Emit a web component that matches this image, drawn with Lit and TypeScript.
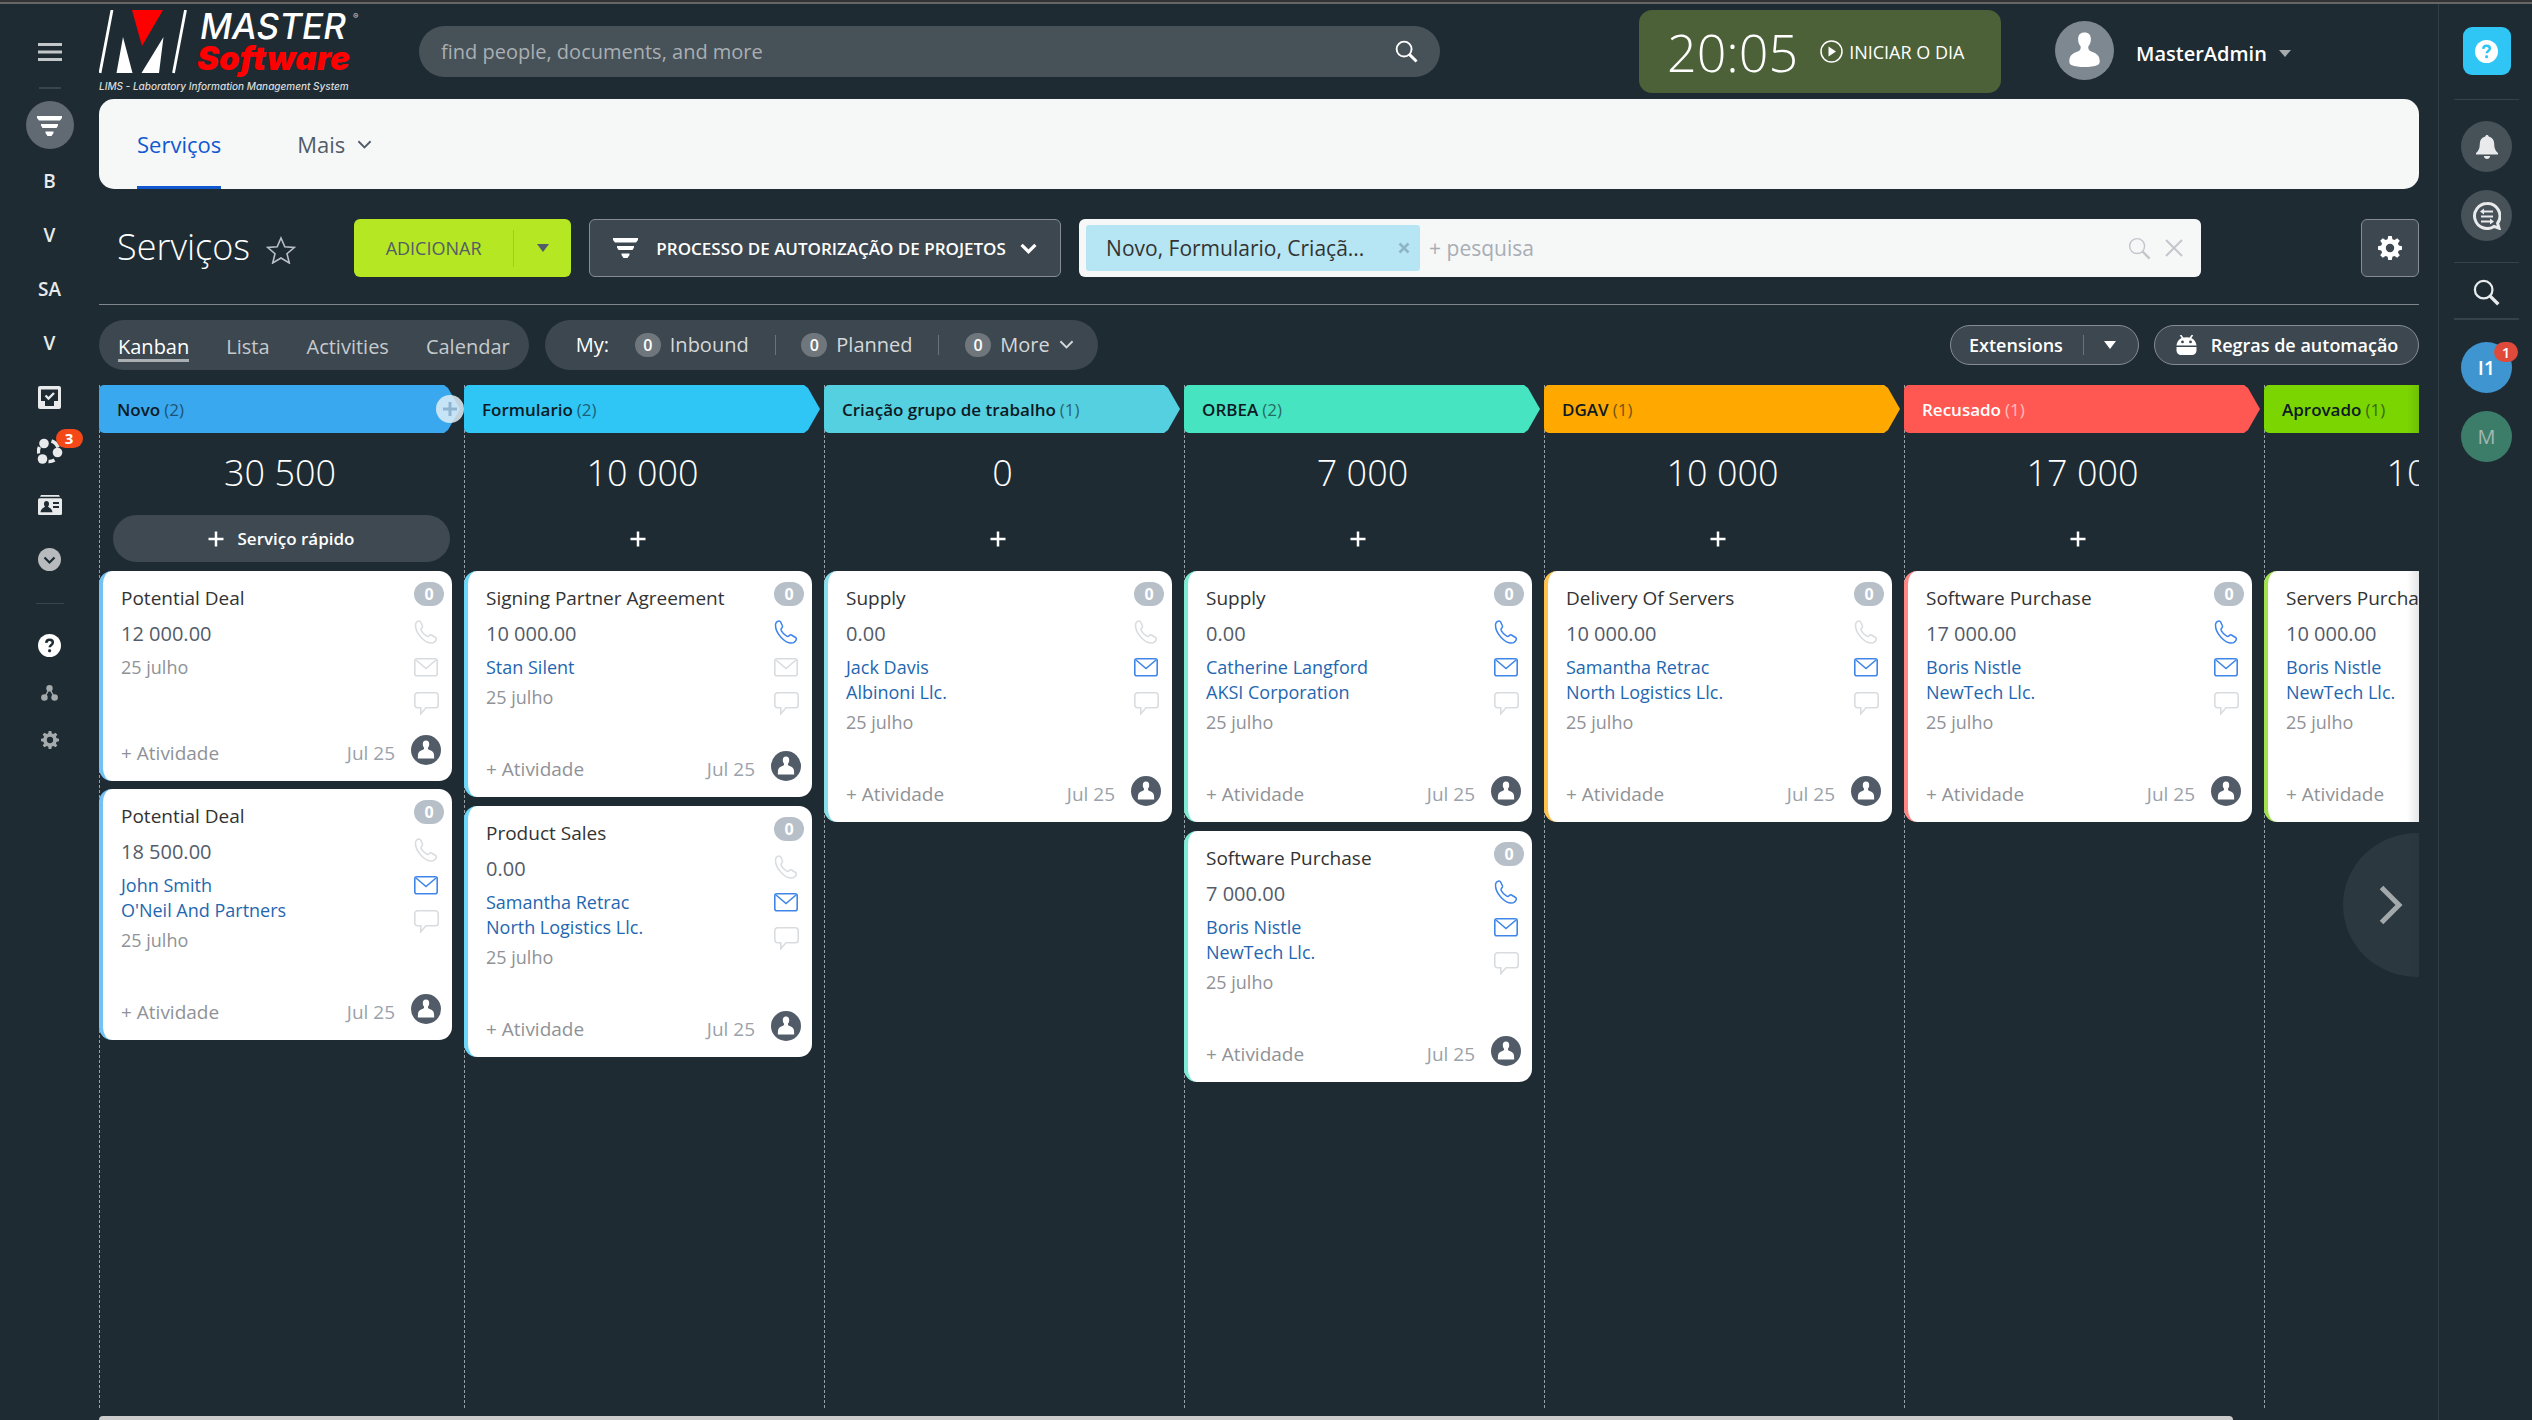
import { LitElement, html, css, svg, nothing } from "lit";
import { customElement, property } from "lit/decorators.js";
import { styleMap } from "lit/directives/style-map.js";
import { classMap } from "lit/directives/class-map.js";

interface Deal {
  title: string;
  amount: string;
  contacts: string[];
  phone?: boolean;
  mail?: boolean;
}

interface Stage {
  name: string;
  count: number;
  total: string;
  color: string;
  strip: string;
  light?: boolean;
  quick?: boolean;
  deals: Deal[];
}

const STAGES: Stage[] = [
  {
    name: "Novo", count: 2, total: "30 500", color: "#39a8ef", strip: "#74c2f4", quick: true,
    deals: [
      { title: "Potential Deal", amount: "12 000.00", contacts: [] },
      { title: "Potential Deal", amount: "18 500.00", contacts: ["John Smith", "O'Neil And Partners"], mail: true },
    ],
  },
  {
    name: "Formulario", count: 2, total: "10 000", color: "#2fc6f6", strip: "#6dd7f9",
    deals: [
      { title: "Signing Partner Agreement", amount: "10 000.00", contacts: ["Stan Silent"], phone: true },
      { title: "Product Sales", amount: "0.00", contacts: ["Samantha Retrac", "North Logistics Llc."], mail: true },
    ],
  },
  {
    name: "Criação grupo de trabalho", count: 1, total: "0", color: "#55d0e0", strip: "#88dfea",
    deals: [{ title: "Supply", amount: "0.00", contacts: ["Jack Davis", "Albinoni Llc."], mail: true }],
  },
  {
    name: "ORBEA", count: 2, total: "7 000", color: "#47e4c2", strip: "#7eecd4",
    deals: [
      { title: "Supply", amount: "0.00", contacts: ["Catherine Langford", "AKSI Corporation"], phone: true, mail: true },
      { title: "Software Purchase", amount: "7 000.00", contacts: ["Boris Nistle", "NewTech Llc."], phone: true, mail: true },
    ],
  },
  {
    name: "DGAV", count: 1, total: "10 000", color: "#ffa900", strip: "#ffc34d",
    deals: [{ title: "Delivery Of Servers", amount: "10 000.00", contacts: ["Samantha Retrac", "North Logistics Llc."], mail: true }],
  },
  {
    name: "Recusado", count: 1, total: "17 000", color: "#ff5752", strip: "#ff8885", light: true,
    deals: [{ title: "Software Purchase", amount: "17 000.00", contacts: ["Boris Nistle", "NewTech Llc."], phone: true, mail: true }],
  },
  {
    name: "Aprovado", count: 1, total: "10 000", color: "#7bd500", strip: "#a3e24d",
    deals: [{ title: "Servers Purchase", amount: "10 000.00", contacts: ["Boris Nistle", "NewTech Llc."], phone: true, mail: true }],
  },
];

const icon = (w: number, h: number, body: unknown) =>
  html`<svg class="icon" width=${w} height=${h} viewBox="0 0 ${w} ${h}" fill="none" aria-hidden="true">${body}</svg>`;

const GEAR_PATH =
  "M10.2 0h3.6l.6 3.2 2.1.9 2.7-1.9 2.6 2.6-1.9 2.7.9 2.1 3.2.6v3.6l-3.2.6-.9 2.1 1.9 2.7-2.6 2.6-2.7-1.9-2.1.9-.6 3.2h-3.6l-.6-3.2-2.1-.9-2.7 1.9-2.6-2.6 1.9-2.7-.9-2.1L0 13.800v-3.6l3.2-.6.9-2.1-1.900-2.700 2.600-2.600 2.700 1.900 2.100-.9zM12 7.800a4.200 4.200 0 100 8.400 4.200 4.200 0 000-8.400z";

const gear = (size: number, color: string) => html`<svg class="icon" width=${size} height=${size} viewBox="0 0 24 24" aria-hidden="true"><path fill=${color} fill-rule="evenodd" d=${GEAR_PATH}/></svg>`;

const magnifier = (size: number, color: string, width: number) => html`<svg class="icon" width=${size} height=${size} viewBox="0 0 24 24" fill="none" aria-hidden="true"><circle cx="9.500" cy="9.500" r="7.800" stroke=${color} stroke-width=${width}/><path d="M15 15l7.500 7.500" stroke=${color} stroke-width=${width + 1}/></svg>`;

const chevron = (w: number, color: string, width: number) => html`<svg class="icon" width=${w} height=${w} viewBox="0 0 16 16" fill="none" aria-hidden="true"><path d="M1.500 4.500L8 11l6.500-6.500" stroke=${color} stroke-width=${width}/></svg>`;

const caret = (color: string) => icon(12, 8, svg`<path d="M0 0h12L6 8z" fill=${color}/>`);

const funnel = icon(25, 21, svg`<path d="M0 0h25v2l-2 2.500H2L0 2zM4 8h17v1.500L19.500 12h-14L4 9.500zM8.500 15.500h8V17l-2 3h-4l-2-3z" fill="#fff"/>`);

const questionMark = (size: number, bg: string, fg: string) => html`<svg class="icon" width=${size} height=${size} viewBox="0 0 24 24" fill="none" aria-hidden="true"><circle cx="12" cy="12" r="12" fill=${bg}/><path d="M8.600 9.200c.2-2 1.500-3.200 3.500-3.200 2 0 3.400 1.100 3.400 2.900 0 2.500-3.300 2.500-3.300 5" stroke=${fg} stroke-width="2.600"/><rect x="10.600" y="16" width="3" height="3" rx="1" fill=${fg}/></svg>`;

@customElement("deal-card")
export class DealCard extends LitElement {
  @property({ attribute: false }) deal!: Deal;
  @property() strip = "";

  static styles = css`
    :host { display: block; }
    .card {
      box-sizing: border-box;
      display: grid;
      grid-template-columns: 1fr 38px;
      grid-template-rows: 1fr auto;
      min-height: 210px;
      padding: 14px 0 0 18px;
      border-radius: 13px;
      border-left: 4px solid;
      background: #fff;
      overflow: hidden;
    }
    .title, .amount, .date { margin: 0; font-weight: 400; white-space: nowrap; }
    .title { font-size: 19px; line-height: 26px; color: #333; font-weight: 500; }
    .amount { margin-top: 10px; font-size: 20px; line-height: 26px; color: #535c69; }
    .contacts { display: flex; flex-direction: column; align-items: flex-start; margin-top: 8px; }
    .contacts.some { margin-bottom: 5px; }
    .contact { font-size: 18px; line-height: 25px; color: #1f67b0; text-decoration: none; white-space: nowrap; }
    .date { font-size: 18px; line-height: 24px; color: #8f9297; }
    .side { display: flex; flex-direction: column; align-items: flex-start; margin-top: -3px; margin-bottom: -50px; }
    .counter {
      width: 30px; height: 24px; border-radius: 12px; background: #b7c0c9; color: #fff;
      font-size: 16px; font-weight: 700; line-height: 25px; text-align: center;
    }
    .side button, .foot button { border: 0; padding: 0; margin: 0; background: none; font: inherit; display: block; }
    .icon { display: block; }
    .side button:nth-of-type(1) { margin-top: 14px; }
    .side button:nth-of-type(2) { margin-top: 14px; }
    .side button:nth-of-type(3) { margin-top: 15px; }
    .foot {
      grid-column: 1 / -1; display: flex; align-items: center; height: 30px;
      margin: 42px 11px 16px 0; gap: 16px;
    }
    .foot .add { margin: 6px auto 0 0; color: #8f9297; font-size: 19px; line-height: 26px; }
    .when { margin-top: 6px; color: #9aa2ab; font-size: 19px; line-height: 26px; }
  `;

  render() {
    const { title, amount, contacts, phone, mail } = this.deal;
    const on = "#3f86e8";
    const off = "#d9dcdf";
    return html`
      <article class="card" style=${styleMap({ borderLeftColor: this.strip })}>
        <div>
          <h3 class="title">${title}</h3>
          <p class="amount">${amount}</p>
          <div class=${classMap({ contacts: true, some: contacts.length > 0 })}>
            ${contacts.map((c) => html`<a class="contact" href="#">${c}</a>`)}
          </div>
          <p class="date">25 julho</p>
        </div>
        <div class="side">
          <span class="counter">0</span>
          <button aria-label="Telefonar">${icon(24, 24, svg`<path d="M1.500 4.500c.3-1.800 1.700-3.300 3.400-3.500 1-.1 1.400.4 1.800 1.200l1.700 3.600c.4.9.2 1.500-.5 2.100-1 .9-1.300 1.600-.7 2.700 1.300 2.300 3.100 4.200 5.500 5.600 1 .6 1.800.3 2.600-.7.700-.8 1.300-1 2.200-.5l4 2.500c.8.500 1.200 1.100.8 2-.8 2-2.500 3.600-4.800 3.600C10.500 23 1 13 1.500 4.500z" stroke=${phone ? on : off} stroke-width="1.500"/>`)}</button>
          <button aria-label="E-mail">${icon(24, 19, svg`<rect x=".8" y=".8" width="22.400" height="17" rx="2" stroke=${mail ? on : off} stroke-width="1.600"/><path d="M2 2l10 8.500L22 2" stroke=${mail ? on : off} stroke-width="1.600"/>`)}</button>
          <button aria-label="Chat">${icon(25, 23, svg`<path d="M3.500.8h18a2.700 2.700 0 012.700 2.700v9.500a2.700 2.700 0 01-2.700 2.700H12l-5.200 6v-6H3.500A2.700 2.700 0 01.8 13V3.500A2.700 2.700 0 013.500.8z" stroke=${off} stroke-width="1.600"/>`)}</button>
        </div>
        <div class="foot">
          <button class="add">+ Atividade</button>
          <span class="when">Jul 25</span>
          ${icon(30, 30, svg`<circle cx="15" cy="15" r="15" fill="#525c69"/><path d="M15 5.500c2.200 0 3.200 1.400 3.200 3.500 0 1.600-.5 2.900-1.300 3.700 0 1.300.3 1.700 1.600 2.200 2.800 1.100 4.300 2.200 4.500 4.800l.2 3.800H6.800l.2-3.800c.2-2.600 1.700-3.700 4.500-4.800 1.300-.5 1.600-.9 1.600-2.200-.8-.8-1.300-2.100-1.300-3.700 0-2.100 1-3.500 3.200-3.500z" fill="#fff"/>`)}
        </div>
      </article>
    `;
  }
}

@customElement("app-root")
export class AppRoot extends LitElement {
  static styles = css`
    :host {
      display: grid;
      grid-template-columns: 99px minmax(0, 1fr) 93px;
      grid-template-rows: 4px minmax(0, 1fr);
      height: 100vh;
      background: #1e2b33;
      color: #fff;
      font-family: "Open Sans", "Noto Sans", sans-serif;
      font-size: 19px;
    }
    * { box-sizing: border-box; }
    button { border: 0; padding: 0; margin: 0; background: none; font: inherit; color: inherit; display: flex; align-items: center; justify-content: center; }
    input { border: 0; padding: 0; margin: 0; background: none; font: inherit; color: inherit; outline: 0; min-width: 0; }
    a { color: inherit; text-decoration: none; }
    h1, p, h2 { margin: 0; }
    .icon { display: block; flex: none; }
    .strip { grid-column: 1 / -1; background: #333; border-bottom: 2px solid #666; }

    .left { display: flex; flex-direction: column; align-items: center; padding-top: 30px; color: #e8eaeb; }
    .left .menu { height: 36px; }
    .left .rule { width: 22px; height: 2px; margin: 17px 0 12px; background: #39454d; }
    .left .rule.low { width: 28px; height: 1px; margin: 17px 0 18px; }
    .left .current { width: 48px; height: 48px; margin-bottom: 5px; border-radius: 50%; background: #616972; }
    .left .current .icon { margin-top: 3px; }
    .left .item { position: relative; width: 60px; height: 54px; font-size: 19px; font-weight: 600; }
    .left .tool { width: 60px; height: 47px; }
    .count {
      position: absolute; left: 36px; top: 5px; width: 27px; height: 19px; border-radius: 10px;
      background: #f54819; color: #fff; font-size: 15px; font-weight: 700; line-height: 19px; text-align: center;
    }

    .right { display: flex; flex-direction: column; align-items: center; padding: 23px 0 0 2px; margin-left: -1px; border-left: 1px solid #323e46; }
    .right .help { width: 48px; height: 48px; border-radius: 9px; background: #2fc6f6; }
    .right .rule { width: 65px; height: 1px; margin: 24px 0 21px; background: #36424a; }
    .right .rule.mid { margin: 21px 0 16px; }
    .right .rule.low { height: 2px; margin: 12px 0 22px; }
    .right .round { position: relative; width: 51px; height: 51px; border-radius: 50%; background: #475158; font-size: 20px; }
    .right .round + .round { margin-top: 18px; }
    .right .round.blue { background: #3e95cf; font-weight: 600; }
    .right .round.green { background: #3c7d6a; color: #a5b8b2; font-weight: 500; }
    .unread {
      position: absolute; right: -6px; top: 0; width: 24px; height: 20px; border-radius: 10px;
      background: #e04a3a; color: #fff; font-size: 15px; font-weight: 600; line-height: 20px; text-align: center;
    }

    .main { display: flex; flex-direction: column; min-width: 0; padding-right: 20px; }
    .top { display: flex; align-items: center; height: 95px; flex: none; }
    .logo { flex: none; width: 320px; }
    .find { display: flex; align-items: center; width: 44%; height: 51px; padding: 0 22px; border-radius: 26px; background: #475158; }
    .find input { flex: 1; font-size: 20px; }
    .find input::placeholder { color: #a9afb3; opacity: 1; }
    .clock { display: flex; align-items: center; gap: 22px; width: 362px; height: 83px; margin-left: auto; margin-right: 54px; padding-left: 28px; border-radius: 13px; background: #4c6138; }
    .time { font-size: 52px; font-weight: 300; line-height: 83px; }
    .clock button { gap: 6px; font-size: 18px; }
    .user { display: flex; align-items: center; width: 364px; margin-top: -2px; }
    .user button { gap: 12px; margin-left: 22px; padding-top: 6px; font-size: 20px; font-weight: 600; }

    .tabs { display: flex; gap: 76px; height: 90px; flex: none; padding: 0 38px; border-radius: 15px; background: #f6f8f8; font-size: 22px; color: #525c69; }
    .tabs .tab { display: flex; align-items: center; border-bottom: 3px solid transparent; padding-top: 3px; }
    .tabs .tab.on { color: #1058d0; border-color: #1058d0; font-weight: 500; }
    .tabs button { gap: 12px; padding-bottom: 0; }

    .actions { display: flex; align-items: center; height: 58px; margin: 30px 0 27px; padding-left: 18px; flex: none; }
    .actions h1 { font-size: 36px; font-weight: 300; line-height: 56px; height: 58px; }
    .star { margin: 4px 58px 0 16px; }
    .create { display: flex; align-items: center; width: 217px; height: 58px; border-radius: 6px; background: #b5e722; color: #535c69; font-size: 18px; font-weight: 500; }
    .create .label { width: 159px; height: 58px; }
    .create .drop { flex: 1; height: 37px; border-left: 1px solid #a1cb2c; }
    .funnel { width: 472px; height: 58px; margin: 0 18px; gap: 18px; border: 1px solid #868d92; border-radius: 6px; background: #3c474f; font-size: 17px; font-weight: 600; white-space: nowrap; }
    .funnel span { margin-right: -4px; }
    .filter { display: flex; align-items: center; flex: 1; min-width: 0; height: 58px; margin-right: 160px; padding: 0 18px 0 7px; border-radius: 6px; background: #f6f8f8; }
    .tag { display: flex; align-items: center; justify-content: space-between; width: 334px; height: 46px; padding: 0 10px 0 20px; border-radius: 3px; background: #b6e6f3; color: #333; font-size: 21px; white-space: nowrap; }
    .filter input { flex: 1; margin-left: 9px; font-size: 21px; color: #333; }
    .filter input::placeholder { color: #a8adb4; opacity: 1; }
    .filter .clear { margin-left: 14px; }
    .settings { width: 58px; height: 58px; border: 1px solid #868d92; border-radius: 6px; background: #3c474f; }

    .views { display: flex; align-items: center; height: 81px; padding-bottom: 1px; border-top: 1px solid #7f878c; flex: none; font-size: 20px; }
    .pill { display: flex; align-items: center; height: 50px; border-radius: 25px; background: #3c474f; }
    .modes { gap: 37px; padding: 0 19px; margin-right: 16px; color: #c6cacd; }
    .modes a { border-bottom: 3px solid transparent; line-height: 25px; padding-top: 6px; }
    .modes a.on { color: #fff; border-color: #a9afb3; }
    .mine { width: 553px; padding: 0 24px 0 31px; justify-content: space-between; color: #d5d8da; }
    .mine .who { color: #fff; font-weight: 500; }
    .mine button { gap: 9px; }
    .zero { width: 26px; height: 24px; border-radius: 12px; background: #6f777d; color: #fff; font-size: 16px; font-weight: 600; line-height: 24px; }
    .bar { width: 1px; height: 20px; background: #6a7379; }
    .ext { display: flex; align-items: center; height: 40px; border: 1px solid #868d92; border-radius: 20px; background: #3c474f; font-size: 18px; font-weight: 600; white-space: nowrap; }
    .split { width: 189px; margin-left: auto; margin-right: 15px; padding: 0 22px 0 18px; justify-content: space-between; }
    .rules { width: 265px; gap: 13px; }

    .board { position: relative; display: flex; flex: 1; min-height: 0; overflow: hidden; padding-bottom: 7px; }
    .board::after {
      content: ""; position: absolute; right: 0; top: 0; bottom: 0; width: 12px;
      background: linear-gradient(to right, rgba(30, 43, 51, 0), rgba(30, 43, 51, .12));
    }
    .column {
      display: flex; flex-direction: column; flex: none; width: 360px;
      background: repeating-linear-gradient(#96a0a5 0 3px, transparent 3px 5px) 0 0 / 1px 100% no-repeat;
    }
    .column.first { width: 365px; }
    .stage { position: relative; margin-right: 4px; }
    .stage h2 {
      display: flex; align-items: center; gap: 4px; height: 48px; padding-left: 18px; padding-top: 1px; border-radius: 5px 0 0 5px;
      clip-path: polygon(0 0, calc(100% - 16px) 0, calc(100% - 12px) 3px, 100% 50%, calc(100% - 12px) 45px, calc(100% - 16px) 100%, 0 100%);
      color: #0d1a24; font-size: 17px; font-weight: 600; white-space: nowrap;
    }
    .stage h2.light { color: #fff; }
    .stage h2 span { font-weight: 400; opacity: .6; }
    .insert { position: absolute; right: -4px; top: 10px; width: 28px; height: 28px; border-radius: 50%; background: rgba(225, 238, 248, .85); }
    .total { height: 82px; margin: 0 3px 0 0; padding-bottom: 4px; display: flex; align-items: center; justify-content: center; font-size: 36px; font-weight: 300; }
    .add { height: 47px; margin: 0 12px 9px 0; gap: 13px; font-size: 17px; font-weight: 600; flex: none; }
    .add.quick { margin: 0 14px 9px; border-radius: 24px; background: #3e4951; }
    .cards { display: flex; flex-direction: column; gap: 9px; margin-right: 12px; }
    .first .cards { gap: 8px; }
    .next { position: absolute; right: -72px; top: 448px; width: 148px; height: 144px; border-radius: 50%; background: #2c3840; justify-content: flex-start; padding-left: 36px; }
    .scroll { height: 4px; width: 92%; flex: none; border-radius: 4px 4px 0 0; background: #ccc; }
  `;

  private plus() {
    return icon(16, 16, svg`<path d="M8 .5v15M.5 8h15" stroke="#fff" stroke-width="2.500"/>`);
  }

  private renderLeft() {
    return html`
      <nav class="left" aria-label="Menu principal">
        <button class="menu" aria-label="Menu">${icon(24, 18, svg`<path d="M0 1.500h24M0 9h24M0 16.500h24" stroke="#c3c7ca" stroke-width="3"/>`)}</button>
        <div class="rule"></div>
        <button class="current" aria-label="CRM">${funnel}</button>
        ${["B", "V", "SA", "V"].map((t) => html`<button class="item">${t}</button>`)}
        <button class="item" aria-label="Tarefas">${icon(23, 23, svg`<path fill-rule="evenodd" d="M2 0h19a2 2 0 012 2v19a2 2 0 01-2 2H2a2 2 0 01-2-2V2a2 2 0 012-2zM3 3.500V15h4v5h9v-5h4V3.500z" fill="#e8eaeb"/><path d="M7.500 9.500l3 3 5.500-5.500" stroke="#e8eaeb" stroke-width="2.400"/>`)}</button>
        <button class="item" aria-label="Colaboração">${icon(26, 26, svg`<path d="M14.500 3a10 10 0 016.500 6.500M17.500 22a10 10 0 01-6 1.500M1.500 15.500a10 10 0 011-6.500" stroke="#e8eaeb" stroke-width="3.500"/><circle cx="7" cy="5.500" r="4.800" fill="#e8eaeb"/><circle cx="20.500" cy="14.500" r="4.800" fill="#e8eaeb"/><circle cx="5.500" cy="21" r="4.800" fill="#e8eaeb"/>`)}<span class="count">3</span></button>
        <button class="item" aria-label="Contactos">${icon(24, 20, svg`<path d="M3 0h18l1 1.800H2z" fill="#e8eaeb"/><rect y="3.200" width="24" height="16.800" rx="1.500" fill="#e8eaeb"/><path d="M8.500 6c1.600 0 2.500 1.100 2.500 2.800 0 1.300-.4 2.200-1 2.800.2 1 4 1.400 4.500 5.700h-12c.5-4.300 4.300-4.700 4.500-5.700-.6-.6-1-1.500-1-2.800C6 7.100 6.900 6 8.500 6zM15 7h6v2h-6zM15 11h6v2h-6z" fill="#1e2b33"/>`)}</button>
        <button class="item" aria-label="Mais">${icon(23, 23, svg`<circle cx="11.500" cy="11.500" r="11.500" fill="#b7bbbd"/><path d="M6.500 9.500l5 5 5-5" stroke="#1e2b33" stroke-width="2.200"/>`)}</button>
        <div class="rule low"></div>
        <button class="tool" aria-label="Ajuda">${questionMark(23, "#fff", "#1e2b33")}</button>
        <button class="tool" aria-label="Estrutura">${icon(17, 16, svg`<path d="M8.500 3.500L3.500 12.500M8.500 3.500l5 9" stroke="#a5aaad" stroke-width="1.500"/><circle cx="8.500" cy="3.200" r="3.200" fill="#a5aaad"/><circle cx="3.400" cy="12.500" r="3.300" fill="#a5aaad"/><circle cx="13.600" cy="12.500" r="3.300" fill="#a5aaad"/>`)}</button>
        <button class="tool" aria-label="Definições">${gear(18, "#a5aaad")}</button>
      </nav>
    `;
  }

  private renderRight() {
    return html`
      <aside class="right">
        <button class="help" aria-label="Ajuda">${questionMark(23, "#fff", "#2fc6f6")}</button>
        <div class="rule"></div>
        <button class="round" aria-label="Notificações">${icon(22, 24, svg`<path d="M11 0c1 0 1.600.7 1.700 1.600 3.600.9 5.300 3.400 5.500 6.900.2 4.500.6 6.500 3.800 9.500v1.500H0V18c3.200-3 3.600-5 3.800-9.500.2-3.500 1.900-6 5.500-6.900C9.400.7 10 0 11 0zM7.800 21h6.400c-.4 1.900-1.600 3-3.200 3s-2.800-1.100-3.200-3z" fill="#e8eaeb"/>`)}</button>
        <button class="round" aria-label="Conversas">${icon(28, 28, svg`<path d="M14 1.500a12.500 12.500 0 107 22.900l5 1.800-1.400-5A12.500 12.500 0 0014 1.500z" stroke="#e8eaeb" stroke-width="3"/><path d="M20 9.500H9.500M8 14.500h12M8 19.500h10.500" stroke="#e8eaeb" stroke-width="2"/><path d="M7 9.500l4-3v6zM21 19.500l-4-3v6z" fill="#e8eaeb"/>`)}</button>
        <div class="rule mid"></div>
        <button aria-label="Pesquisar">${magnifier(27, "#e8eaeb", 2)}</button>
        <div class="rule low"></div>
        <button class="round blue">I1<span class="unread">1</span></button>
        <button class="round green">M</button>
      </aside>
    `;
  }

  private renderTop() {
    return html`
      <header class="top">
        <a class="logo" href="#" aria-label="MASTER Software">
          <svg class="icon" width="280" height="84" viewBox="0 0 280 84">
            <path d="M1 63L13 0M74.500 63L86.500 0" stroke="#fff" stroke-width="2.800"/>
            <path d="M33 0h31L43 36z" fill="#f00"/>
            <path d="M24 27l9.500 36H17.500zM64.500 27L60 63H42.500z" fill="#fff"/>
            <text x="101" y="29" font-family="Inter" font-size="35" font-weight="500" font-style="italic" fill="#fff">MASTER</text>
            <text x="98" y="60" font-family="Inter" font-size="33" font-weight="900" font-style="italic" fill="#f00">Software</text>
            <text x="254" y="9" font-family="Inter" font-size="8" fill="#d0d4d6">®</text>
            <text x="0" y="80" font-family="Inter" font-size="10" font-weight="500" font-style="italic" fill="#d8dbdd">LIMS - Laboratory Information Management System</text>
          </svg>
        </a>
        <label class="find">
          <input type="text" placeholder="find people, documents, and more" aria-label="Search" />
          ${magnifier(23, "#fff", 2)}
        </label>
        <div class="clock">
          <span class="time">20:05</span>
          <button>${icon(23, 23, svg`<circle cx="11.500" cy="11.500" r="10.500" stroke="#fff" stroke-width="1.500"/><path d="M8.500 6.500l7.500 5-7.500 5z" fill="#fff"/>`)}INICIAR O DIA</button>
        </div>
        <div class="user">
          ${icon(59, 59, svg`<circle cx="29.500" cy="29.500" r="29.500" fill="#7d8891"/><path d="M29.500 11.500c4.300 0 6.400 2.600 6.400 6.600 0 3.200-1 5.800-2.600 7.500-.2 2.800.6 4 3 5 5.500 2 8.200 4 8.400 9.500 0 2-.5 3.200-2 4-3.500 1.500-8 2-13.200 2s-9.700-.5-13.200-2c-1.500-.8-2-2-2-4 .2-5.500 2.900-7.500 8.400-9.500 2.400-1 3.200-2.200 3-5-1.600-1.700-2.600-4.300-2.600-7.500 0-4 2.100-6.600 6.400-6.600z" fill="#fff"/>`)}
          <button>MasterAdmin ${icon(12, 7, svg`<path d="M0 0h12L6 7z" fill="#a5aaad"/>`)}</button>
        </div>
      </header>
      <nav class="tabs">
        <a class="tab on" href="#">Serviços</a>
        <button class="tab">Mais ${chevron(15, "#525c69", 2)}</button>
      </nav>
    `;
  }

  private renderActions() {
    return html`
      <section class="actions">
        <h1>Serviços</h1>
        <button class="star" aria-label="Favorito">${icon(30, 28, svg`<path d="M15 2l3.800 8.700 9.400.8-7.200 6.200 2.300 9.300L15 22l-8.300 5L9 17.700 1.800 11.500l9.400-.8z" stroke="#b9bfc6" stroke-width="1.600"/>`)}</button>
        <div class="create">
          <button class="label">ADICIONAR</button>
          <button class="drop" aria-label="Mais opções">${caret("#535c69")}</button>
        </div>
        <button class="funnel">${funnel}<span>PROCESSO DE AUTORIZAÇÃO DE PROJETOS</span>${chevron(17, "#fff", 3)}</button>
        <div class="filter">
          <div class="tag">Novo, Formulario, Criaçã...<button aria-label="Remover filtro">${icon(12, 12, svg`<path d="M1.500 1.500l9 9m0-9l-9 9" stroke="#8fb3c6" stroke-width="2.500"/>`)}</button></div>
          <input type="text" placeholder="+ pesquisa" aria-label="Pesquisa" />
          <button aria-label="Pesquisar">${magnifier(23, "#c3c7cb", 1.5)}</button>
          <button class="clear" aria-label="Limpar">${icon(18, 18, svg`<path d="M1 1l16 16M17 1L1 17" stroke="#c3c7cb" stroke-width="2"/>`)}</button>
        </div>
        <button class="settings" aria-label="Definições">${gear(24, "#fff")}</button>
      </section>
    `;
  }

  private renderViews() {
    return html`
      <section class="views">
        <nav class="pill modes">
          <a class="on" href="#">Kanban</a><a href="#">Lista</a><a href="#">Activities</a><a href="#">Calendar</a>
        </nav>
        <div class="pill mine">
          <span class="who">My:</span>
          <button><span class="zero">0</span>Inbound</button>
          <span class="bar"></span>
          <button><span class="zero">0</span>Planned</button>
          <span class="bar"></span>
          <button><span class="zero">0</span>More ${chevron(15, "#d5d8da", 2)}</button>
        </div>
        <div class="ext split">
          <button>Extensions</button>
          <span class="bar"></span>
          <button aria-label="Mais extensões">${caret("#fff")}</button>
        </div>
        <button class="ext rules">${icon(23, 20, svg`<path d="M5.500 0l2.500 3.500M17.500 0L15 3.500" stroke="#fff" stroke-width="1.600"/><path fill-rule="evenodd" d="M1.500 10.500C2 5.500 5.500 2.200 11.500 2.200s9.500 3.300 10 8.300zM7.500 5.500a1.400 1.400 0 100 2.800 1.400 1.400 0 000-2.800zm8 0a1.400 1.400 0 100 2.800 1.400 1.400 0 000-2.800zM1.500 12h20v3.500a4.500 4.500 0 01-4.500 4.500H6a4.500 4.500 0 01-4.500-4.500z" fill="#fff"/>`)}Regras de automação</button>
      </section>
    `;
  }

  private renderStage(stage: Stage) {
    return html`
      <section class=${classMap({ column: true, first: !!stage.quick })}>
        <div class="stage">
          <h2 class=${classMap({ light: !!stage.light })} style=${styleMap({ backgroundColor: stage.color })}>${stage.name}<span>(${stage.count})</span></h2>
          ${stage.quick
            ? html`<button class="insert" aria-label="Adicionar etapa">${icon(14, 14, svg`<path d="M7 0v14M0 7h14" stroke="#8fb4d0" stroke-width="3"/>`)}</button>`
            : nothing}
        </div>
        <p class="total">${stage.total}</p>
        <button class=${classMap({ add: true, quick: !!stage.quick })} aria-label="Serviço rápido">
          ${this.plus()}${stage.quick ? "Serviço rápido" : nothing}
        </button>
        <div class="cards">
          ${stage.deals.map((d) => html`<deal-card .deal=${d} .strip=${stage.strip}></deal-card>`)}
        </div>
      </section>
    `;
  }

  render() {
    return html`
      <div class="strip"></div>
      ${this.renderLeft()}
      <main class="main">
        ${this.renderTop()} ${this.renderActions()} ${this.renderViews()}
        <div class="board">
          ${STAGES.map((s) => this.renderStage(s))}
          <button class="next" aria-label="Próximo">${icon(24, 40, svg`<path d="M2.500 2.500L20 20 2.500 37.500" stroke="#a3a8ab" stroke-width="5"/>`)}</button>
        </div>
        <div class="scroll"></div>
      </main>
      ${this.renderRight()}
    `;
  }
}
